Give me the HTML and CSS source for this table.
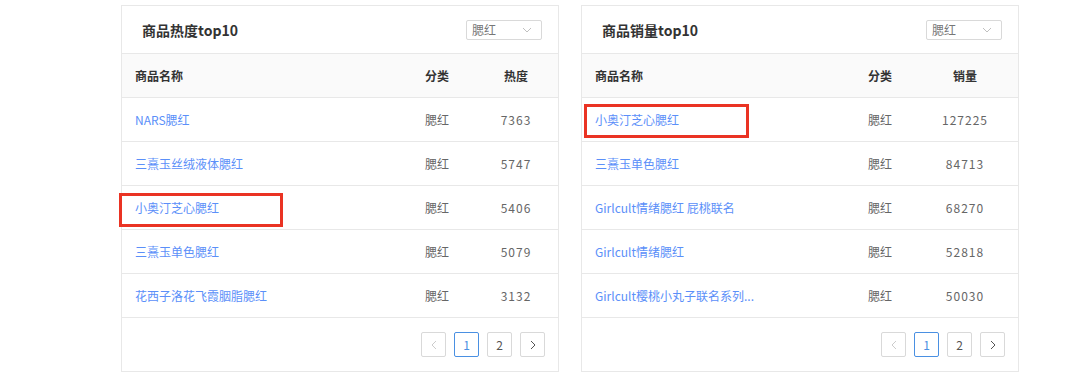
FILE: index.html
```html
<!DOCTYPE html>
<html lang="zh">
<head>
<meta charset="utf-8">
<link rel="stylesheet" href="styles.css">
</head>
<body>
<div class="page">
  <section class="card card-hot">
    <header class="card-head">
      <h2 class="card-title">商品热度top10</h2>
      <div class="select"><span>腮红</span><svg class="chev" width="10" height="6" viewBox="0 0 10 6"><path d="M1 1l4 4 4-4" fill="none" stroke="#c0c0c0" stroke-width="1"/></svg></div>
    </header>
    <div class="row thead"><div class="c-name">商品名称</div><div class="c-cat">分类</div><div class="c-val">热度</div></div>
    <div class="row"><div class="c-name link">NARS腮红</div><div class="c-cat">腮红</div><div class="c-val num">7363</div></div>
    <div class="row"><div class="c-name link">三熹玉丝绒液体腮红</div><div class="c-cat">腮红</div><div class="c-val num">5747</div></div>
    <div class="row"><div class="c-name link">小奥汀芝心腮红</div><div class="c-cat">腮红</div><div class="c-val num">5406</div><span class="mark mark-left"></span></div>
    <div class="row"><div class="c-name link">三熹玉单色腮红</div><div class="c-cat">腮红</div><div class="c-val num">5079</div></div>
    <div class="row"><div class="c-name link">花西子洛花飞霞胭脂腮红</div><div class="c-cat">腮红</div><div class="c-val num">3132</div></div>
    <footer class="card-foot">
      <span class="pg disabled"><svg width="6" height="10" viewBox="0 0 6 10"><path d="M5 1L1 5l4 4" fill="none" stroke="currentColor" stroke-width="1"/></svg></span>
      <span class="pg active">1</span>
      <span class="pg">2</span>
      <span class="pg"><svg width="6" height="10" viewBox="0 0 6 10"><path d="M1 1l4 4-4 4" fill="none" stroke="currentColor" stroke-width="1"/></svg></span>
    </footer>
  </section>

  <section class="card card-sales">
    <header class="card-head">
      <h2 class="card-title">商品销量top10</h2>
      <div class="select"><span>腮红</span><svg class="chev" width="10" height="6" viewBox="0 0 10 6"><path d="M1 1l4 4 4-4" fill="none" stroke="#c0c0c0" stroke-width="1"/></svg></div>
    </header>
    <div class="row thead"><div class="c-name">商品名称</div><div class="c-cat">分类</div><div class="c-val">销量</div></div>
    <div class="row"><div class="c-name link">小奥汀芝心腮红</div><div class="c-cat">腮红</div><div class="c-val num">127225</div><span class="mark mark-right"></span></div>
    <div class="row"><div class="c-name link">三熹玉单色腮红</div><div class="c-cat">腮红</div><div class="c-val num">84713</div></div>
    <div class="row"><div class="c-name link">Girlcult情绪腮红 屁桃联名</div><div class="c-cat">腮红</div><div class="c-val num">68270</div></div>
    <div class="row"><div class="c-name link">Girlcult情绪腮红</div><div class="c-cat">腮红</div><div class="c-val num">52818</div></div>
    <div class="row"><div class="c-name link">Girlcult樱桃小丸子联名系列...</div><div class="c-cat">腮红</div><div class="c-val num">50030</div></div>
    <footer class="card-foot">
      <span class="pg disabled"><svg width="6" height="10" viewBox="0 0 6 10"><path d="M5 1L1 5l4 4" fill="none" stroke="currentColor" stroke-width="1"/></svg></span>
      <span class="pg active">1</span>
      <span class="pg">2</span>
      <span class="pg"><svg width="6" height="10" viewBox="0 0 6 10"><path d="M1 1l4 4-4 4" fill="none" stroke="currentColor" stroke-width="1"/></svg></span>
    </footer>
  </section>
</div>
</body>
</html>
```

FILE: styles.css
```css
* { box-sizing: border-box; }
html, body { margin: 0; padding: 0; background: #fff; }
body {
  font-family: "Noto Sans CJK SC", "Noto Sans", sans-serif;
  font-size: 12px;
  color: #666;
}
.page {
  display: flex;
  gap: 22px;
  padding: 5px 0 0 121px;
}
.card {
  width: 438px;
  border: 1px solid #e8e8e8;
  background: #fff;
}
.card-head {
  height: 48px;
  display: flex;
  align-items: center;
  justify-content: space-between;
  padding: 0 16px 0 20px;
  border-bottom: 1px solid #e8e8e8;
}
.card-title {
  margin: 0;
  font-size: 14px;
  font-weight: 600;
  color: #333;
}
.select {
  width: 76px;
  height: 20px;
  border: 1px solid #d9d9d9;
  border-radius: 2px;
  display: flex;
  align-items: center;
  justify-content: space-between;
  padding: 0 9px 0 5px;
  font-size: 12px;
  color: #777;
  line-height: 1;
}
.row {
  position: relative;
  display: grid;
  height: 44px;
  align-items: center;
  border-bottom: 1px solid #e8e8e8;
}
.card-hot .row { grid-template-columns: 287px 65px 84px; }
.card-sales .row { grid-template-columns: 270px 60px 106px; }
.thead {
  background: #fafafa;
  color: #333;
  font-weight: 600;
}
.c-name { padding-left: 13px; white-space: nowrap; overflow: hidden; }
.c-cat { padding-left: 16px; }
.c-val { text-align: center; }
.num { letter-spacing: 1px; color: #666; }
.link { color: #5b8ff9; }
.mark {
  position: absolute;
  border: 3px solid #ea3323;
  height: 34px;
}
.mark-left { left: -3px; top: 7px; width: 164px; }
.mark-right { left: 2px; top: 6px; width: 165px; }
.card-foot {
  height: 53px;
  display: flex;
  align-items: center;
  justify-content: flex-end;
  gap: 8px;
  padding-right: 13px;
}
.pg {
  width: 25px;
  height: 25px;
  border: 1px solid #d9d9d9;
  border-radius: 2px;
  display: flex;
  align-items: center;
  justify-content: center;
  font-size: 12px;
  color: #555;
}
.pg.disabled { color: #ccc; }
.pg.active { border-color: #4a90e2; color: #4a90e2; }
```
